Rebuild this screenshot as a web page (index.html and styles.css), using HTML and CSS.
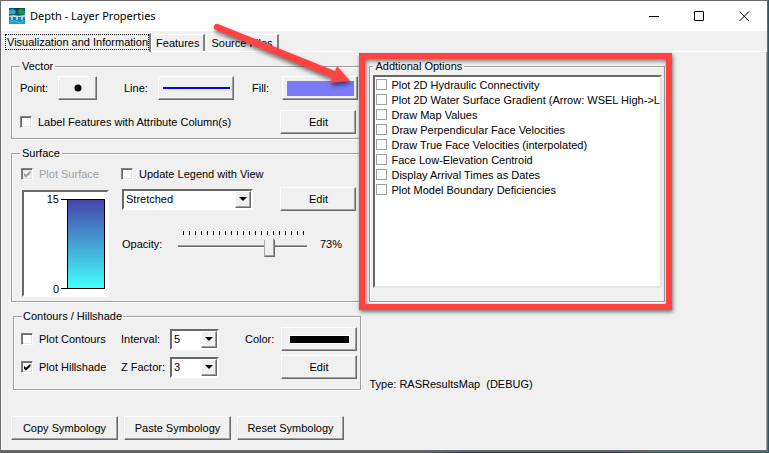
FILE: index.html
```html
<!DOCTYPE html>
<html lang="en">
<head>
<meta charset="utf-8">
<title>Depth - Layer Properties</title>
<link rel="stylesheet" href="styles.css">
</head>
<body>
<main class="dialog">
  <header class="titlebar">
    <svg class="app-icon" width="16" height="16" viewBox="0 0 16 16" aria-hidden="true">
      <rect width="16" height="16" fill="#1287ae"/>
      <path d="M0 0H16V6L12 7H0Z" fill="#0b5a62"/>
      <path d="M0 2L4 1L7 3L6 6L0 6Z" fill="#25a9cf"/>
      <path d="M5 0H11L9 3L6 2Z" fill="#0c3f36"/>
      <path d="M9 2L12 1L16 3V6L10 6Z" fill="#2b8a52"/>
      <path d="M0 8L4 7L9 8L16 7V9H0Z" fill="#b9dce4"/>
      <path d="M2 9H4V12H2ZM7 9H9V12H7ZM12 9H14V12H12Z" fill="#a5cbd8"/>
      <path d="M0 12L4 12L9 13L16 12V16H0Z" fill="#1a9ccc"/>
      <path d="M1 14L6 13L11 15L15 13" fill="none" stroke="#4cc0de"/>
    </svg>
    <h1 class="title">Depth - Layer Properties</h1>
    <div class="window-buttons">
      <button class="window-button" aria-label="Minimize"><svg width="11" height="11" viewBox="0 0 11 11"><path d="M0 5.500H10" stroke="#000"/></svg></button>
      <button class="window-button" aria-label="Maximize"><svg width="11" height="11" viewBox="0 0 11 11"><path d="M.5.500H9.500V9.500H.5Z" fill="none" stroke="#000"/></svg></button>
      <button class="window-button" aria-label="Close"><svg width="11" height="11" viewBox="0 0 11 11"><path d="M.5.500L10 10M10 .5L.5 10" stroke="#000"/></svg></button>
    </div>
  </header>

  <nav class="tabs" role="tablist">
    <button class="tab tab-active" role="tab" aria-selected="true">Visualization and Information</button>
    <button class="tab" role="tab">Features</button>
    <button class="tab" role="tab">Source Files</button>
  </nav>

  <section class="page">
    <div class="settings">
      <fieldset class="group">
        <legend>Vector</legend>
        <div class="vector-row">
          <span>Point:</span>
          <button class="button" aria-label="Point symbol"><svg width="8" height="8" viewBox="0 0 8 8"><circle cx="4" cy="4" r="3.500"/></svg></button>
          <span class="label-line">Line:</span>
          <button class="button" aria-label="Line symbol"><span class="line-sample"></span></button>
          <span class="label-fill">Fill:</span>
          <button class="button" aria-label="Fill symbol"><span class="fill-sample"></span></button>
        </div>
        <div class="label-row">
          <label class="check"><input type="checkbox">Label Features with Attribute Column(s)</label>
          <button class="button button-edit">Edit</button>
        </div>
      </fieldset>

      <fieldset class="group surface">
        <legend>Surface</legend>
        <div class="surface-checks">
          <label class="check"><input type="checkbox" checked disabled>Plot Surface</label>
          <label class="check"><input type="checkbox">Update Legend with View</label>
        </div>
        <div class="surface-body">
          <div class="ramp">
            <div class="ramp-labels"><span>15</span><span>0</span></div>
            <div class="ramp-bar"></div>
          </div>
          <div class="surface-controls">
            <div class="stretch-row">
              <div class="combo">
                <select aria-label="Surface style"><option>Stretched</option></select>
                <span class="combo-arrow"></span>
              </div>
              <button class="button button-edit">Edit</button>
            </div>
            <div class="opacity-row">
              <label for="opacity">Opacity:</label>
              <div class="slider">
                <div class="ticks"></div>
                <input id="opacity" type="range" min="0" max="100" value="73">
              </div>
              <output for="opacity">73%</output>
            </div>
          </div>
        </div>
      </fieldset>

      <fieldset class="group contours">
        <legend>Contours / Hillshade</legend>
        <div class="contour-grid">
          <label class="check"><input type="checkbox">Plot Contours</label>
          <label for="interval">Interval:</label>
          <div class="combo">
            <select id="interval"><option>5</option></select>
            <span class="combo-arrow"></span>
          </div>
          <span class="label-color">Color:</span>
          <button class="button" aria-label="Contour color"><span class="color-sample"></span></button>
          <label class="check"><input type="checkbox" checked>Plot Hillshade</label>
          <label for="zfactor">Z Factor:</label>
          <div class="combo">
            <select id="zfactor"><option>3</option></select>
            <span class="combo-arrow"></span>
          </div>
          <button class="button hillshade-edit">Edit</button>
        </div>
      </fieldset>

      <div class="actions">
        <button class="button">Copy Symbology</button>
        <button class="button">Paste Symbology</button>
        <button class="button">Reset Symbology</button>
      </div>
    </div>

    <div class="side">
      <div class="options">
        <fieldset class="group options-group">
          <legend>Addtional Options</legend>
          <div class="option-list">
            <label class="option"><input type="checkbox">Plot 2D Hydraulic Connectivity</label>
            <label class="option"><input type="checkbox">Plot 2D Water Surface Gradient (Arrow: WSEL High-&gt;L</label>
            <label class="option"><input type="checkbox">Draw Map Values</label>
            <label class="option"><input type="checkbox">Draw Perpendicular Face Velocities</label>
            <label class="option"><input type="checkbox">Draw True Face Velocities (interpolated)</label>
            <label class="option"><input type="checkbox">Face Low-Elevation Centroid</label>
            <label class="option"><input type="checkbox">Display Arrival Times as Dates</label>
            <label class="option"><input type="checkbox">Plot Model Boundary Deficiencies</label>
          </div>
        </fieldset>
        <div class="highlight"></div>
        <svg class="pointer" width="150" height="70" viewBox="210 20 150 70" aria-hidden="true">
          <path d="M218 24L335 71L337 66L350 81L330 83L332 78L216 30A3 3 0 0 1 218 24Z" fill="#ff4343"/>
        </svg>
      </div>
      <p class="type">Type: RASResultsMap&nbsp; (DEBUG)</p>
    </div>
  </section>
</main>
</body>
</html>
```
FILE: styles.css
```css
* {
  box-sizing: border-box;
}

body {
  margin: 0;
  background: linear-gradient(90deg, #5a5a5a 55%, #2b2b52 60%, #2b2b52 80%, #2c5860 84%);
  color: #000;
  font: 11px/14px "Liberation Sans", Arial, sans-serif;
}

button,
select {
  margin: 0;
  color: inherit;
  font: inherit;
}

.dialog {
  display: flex;
  flex-direction: column;
  min-height: calc(100vh - 1px);
  margin-right: 1px;
  border: 1px solid #696969;
  border-bottom-width: 2px;
  background: #f0f0f0;
}

/* Title bar */
.titlebar {
  display: flex;
  align-items: center;
  height: 30px;
  padding-left: 8px;
  background: #fff;
}

.title {
  flex: 1;
  margin: 0 0 0 5px;
  font: 11px/16px "Noto Sans", "Open Sans", sans-serif;
}

.window-buttons {
  display: flex;
}

.window-button {
  display: grid;
  place-items: center;
  width: 45px;
  height: 30px;
  padding: 0;
  border: 0;
  background: none;
}

/* Tabs */
.tabs {
  display: flex;
  align-items: flex-end;
  height: 21px;
  padding-left: 3px;
  border-bottom: 1px solid #fff;
}

.tab {
  height: 17px;
  padding: 0 4px;
  margin-right: 1px;
  border: 1px solid #fff;
  border-right: 2px solid #808080;
  border-bottom: 0;
  background: #f0f0f0;
  white-space: nowrap;
}

.tab-active {
  height: 19px;
  margin: 0 0 -1px;
  padding: 0 1px 2px 2px;
  position: relative;
}

.tab-active::after {
  content: "";
  position: absolute;
  inset: 0 0 2px;
  border: 1px dotted #000;
}

/* Tab page */
.page {
  flex: 1;
  display: grid;
  grid-template-columns: minmax(350px, 350fr) minmax(200px, 295fr) 85fr;
  column-gap: 8px;
  padding: 7px 8px 8px 9px;
  border-right: 1px solid #a0a0a0;
  border-left: 1px solid #fff;
}

.settings {
  display: flex;
  flex-direction: column;
}

.group {
  min-width: 0;
  margin: 0;
  padding: 0 4px 4px 8px;
  border: 1px solid #a0a0a0;
  box-shadow: 1px 1px #fff, inset 1px 1px #fff;
}

.group legend {
  height: 14px;
  padding: 0 2px;
  background: #f0f0f0;
}

.button {
  display: grid;
  place-items: center;
  height: 24px;
  padding: 0;
  border: 1px solid;
  border-color: #fff #696969 #696969 #fff;
  background: #f0f0f0;
  box-shadow: inset -1px -1px #a0a0a0;
}

.button-edit {
  width: 76px;
}

.check,
.option {
  display: flex;
  align-items: center;
  white-space: nowrap;
}

.check {
  gap: 6px;
}

input[type="checkbox"] {
  flex: none;
  display: grid;
  place-items: center;
  width: 12px;
  height: 12px;
  margin: 0;
  appearance: none;
  border: 1px solid;
  border-color: #808080 #fff #fff #808080;
  background: #fff;
  box-shadow: inset 1px 1px #696969, inset -1px -1px #e3e3e3;
}

input[type="checkbox"]:checked::before {
  content: "";
  width: 7px;
  height: 7px;
  background: #000;
  clip-path: polygon(0 30%, 36% 62%, 100% 0, 100% 40%, 36% 100%, 0 70%);
}

input[type="checkbox"]:disabled {
  background: #f0f0f0;
}

input[type="checkbox"]:disabled::before {
  background: #a0a0a0;
}

.check:has(:disabled) {
  color: #a0a0a0;
}

/* Vector group */
.vector-row {
  display: grid;
  grid-template-columns: 38px 39px 61px 76px 48px 76px;
  align-items: center;
  padding-top: 3px;
}

.label-line {
  padding-left: 27px;
}

.label-fill {
  padding-left: 18px;
}

.line-sample {
  width: 67px;
  height: 2px;
  background: #00f;
}

.fill-sample {
  width: 67px;
  height: 15px;
  background: #7b7bf7;
}

.label-row {
  display: flex;
  align-items: center;
  justify-content: space-between;
  padding-top: 10px;
}

/* Surface group */
.surface {
  margin-top: 7px;
}

.surface-checks {
  display: grid;
  grid-template-columns: 100px 1fr;
  padding: 7px 0 9px 1px;
}

.surface-body {
  display: flex;
  gap: 13px;
  padding-left: 2px;
}

.ramp {
  display: flex;
  width: 87px;
  height: 107px;
  padding: 7px 2px 6px 0;
  border: 2px solid;
  border-color: #696969 #fff #fff #696969;
  background: #fff;
}

.ramp-labels {
  display: flex;
  flex: 1;
  flex-direction: column;
  justify-content: space-between;
  margin: -7px 8px -7px 0;
  text-align: right;
}

.ramp-bar {
  position: relative;
  width: 38px;
  border: 1px solid #000;
  background: linear-gradient(#4444aa, #44ffff);
}

.ramp-bar::before {
  content: "";
  position: absolute;
  inset: -1px 100% -1px -7px;
  border: solid #000;
  border-width: 1px 0;
}

.surface-controls {
  flex: 1;
}

.stretch-row {
  display: flex;
  justify-content: space-between;
  align-items: center;
  margin-top: -3px;
}

.stretch-row .combo {
  width: 131px;
}

.combo {
  position: relative;
  height: 21px;
}

.combo select {
  width: 100%;
  height: 100%;
  padding: 0 18px 0 2px;
  appearance: none;
  border: 2px solid;
  border-color: #696969 #fff #fff #696969;
  border-radius: 0;
  background: #fff;
}

.combo-arrow {
  position: absolute;
  top: 2px;
  right: 2px;
  display: grid;
  place-items: center;
  width: 16px;
  height: 17px;
  border: 1px solid;
  border-color: #fff #696969 #696969 #fff;
  background: #f0f0f0;
  box-shadow: inset -1px -1px #a0a0a0;
  pointer-events: none;
}

.combo-arrow::before {
  content: "";
  border: 4px solid transparent;
  border-top-color: #000;
  border-bottom: 0;
}

.opacity-row {
  display: flex;
  align-items: center;
  margin-top: 20px;
}

.opacity-row label {
  width: 56px;
}

.slider {
  width: 129px;
  margin-right: 13px;
}

.ticks {
  height: 4px;
  margin: 0 3px 0 5px;
  background: repeating-linear-gradient(90deg, #000 0 1px, transparent 1px 6px);
}

.slider input {
  display: block;
  width: 100%;
  height: 22px;
  margin: 0;
  appearance: none;
  background: linear-gradient(#a0a0a0 0 1px, #696969 1px 2px, #fff 2px 3px) 0 10px / 100% 3px no-repeat;
}

.slider input::-webkit-slider-thumb {
  width: 11px;
  height: 22px;
  appearance: none;
  border: 1px solid;
  border-color: #a0a0a0 #696969 #696969 #a0a0a0;
  background: #f0f0f0;
  box-shadow: inset -1px -1px #a0a0a0;
  clip-path: polygon(50% 0, 100% 24%, 100% 100%, 0 100%, 0 24%);
}

/* Contours group */
.contours {
  margin: 7px 0 0 2px;
}

.contours legend {
  padding: 0 1px;
}

.contour-grid {
  display: grid;
  grid-template-columns: 100px 49px 49px 62px 76px;
  align-items: center;
  row-gap: 4px;
  padding: 4px 0 6px;
  margin-left: -1px;
}

.label-color {
  padding-left: 26px;
}

.color-sample {
  width: 61px;
  height: 9px;
  border: 1px solid #fff;
  background: #000;
}

.hillshade-edit {
  grid-column: 5;
}

.actions {
  display: grid;
  grid-template-columns: repeat(3, 107px);
  gap: 6px;
  margin-top: 26px;
}

/* Options column */
.options {
  position: relative;
}

.options-group {
  height: 243px;
  padding: 2px 2px 13px 3px;
}

.option-list {
  height: 213px;
  overflow: hidden;
  border: 2px solid;
  border-color: #696969 #e3e3e3 #e3e3e3 #696969;
  background: #fff;
}

.option {
  gap: 4px;
  height: 15px;
  padding-left: 1px;
}

.option input[type="checkbox"] {
  width: 11px;
  height: 11px;
  border-color: #a0a0a0;
  box-shadow: none;
}

.highlight {
  position: absolute;
  inset: -6px -7px -8px -10px;
  border: 6px solid #ff4343;
  box-shadow: 1px 2px 4px #0008, inset 1px 2px 4px #0008;
  pointer-events: none;
}

.pointer {
  position: absolute;
  top: -39px;
  left: -159px;
  filter: drop-shadow(1px 3px 2px #0008);
  pointer-events: none;
}

.type {
  margin: 75px 0 0;
}
```
